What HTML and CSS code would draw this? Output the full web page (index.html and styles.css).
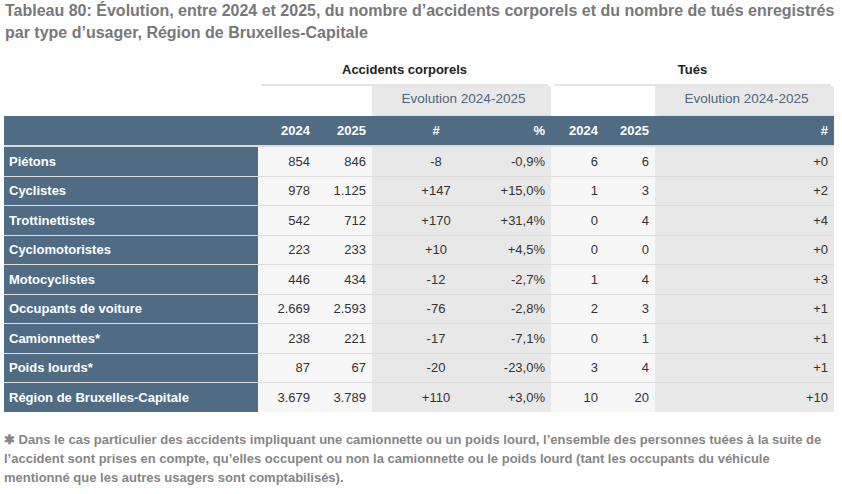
FILE: index.html
```html
<!DOCTYPE html>
<html lang="fr">
<head>
<meta charset="utf-8">
<title>Tableau 80</title>
<link rel="stylesheet" href="styles.css">
</head>
<body>
<h1 class="title">Tableau 80: Évolution, entre 2024 et 2025, du nombre d’accidents corporels et du nombre de tués enregistrés par type d’usager, Région de Bruxelles-Capitale</h1>
<table class="data">
  <colgroup>
    <col class="w-label">
    <col class="w-a24">
    <col class="w-a25">
    <col class="w-anum">
    <col class="w-apct">
    <col class="w-t24">
    <col class="w-t25">
    <col class="w-tnum">
  </colgroup>
  <thead>
    <tr class="groups">
      <th></th>
      <th colspan="4"><div class="group">Accidents corporels</div></th>
      <th colspan="3"><div class="group">Tués</div></th>
    </tr>
    <tr class="sub">
      <th></th>
      <th colspan="2"></th>
      <th colspan="2" class="evo"><div class="evo-in">Evolution 2024-2025</div></th>
      <th colspan="2"></th>
      <th class="evo"><div class="evo-in">Evolution 2024-2025</div></th>
    </tr>
    <tr class="cols">
      <th></th>
      <th>2024</th>
      <th>2025</th>
      <th class="center">#</th>
      <th>%</th>
      <th>2024</th>
      <th>2025</th>
      <th>#</th>
    </tr>
  </thead>
  <tbody>
    <tr><th>Piétons</th><td class="yr">854</td><td class="yr">846</td><td class="ev center">-8</td><td class="ev">-0,9%</td><td class="yr">6</td><td class="yr">6</td><td class="ev">+0</td></tr>
    <tr><th>Cyclistes</th><td class="yr">978</td><td class="yr">1.125</td><td class="ev center">+147</td><td class="ev">+15,0%</td><td class="yr">1</td><td class="yr">3</td><td class="ev">+2</td></tr>
    <tr><th>Trottinettistes</th><td class="yr">542</td><td class="yr">712</td><td class="ev center">+170</td><td class="ev">+31,4%</td><td class="yr">0</td><td class="yr">4</td><td class="ev">+4</td></tr>
    <tr><th>Cyclomotoristes</th><td class="yr">223</td><td class="yr">233</td><td class="ev center">+10</td><td class="ev">+4,5%</td><td class="yr">0</td><td class="yr">0</td><td class="ev">+0</td></tr>
    <tr><th>Motocyclistes</th><td class="yr">446</td><td class="yr">434</td><td class="ev center">-12</td><td class="ev">-2,7%</td><td class="yr">1</td><td class="yr">4</td><td class="ev">+3</td></tr>
    <tr><th>Occupants de voiture</th><td class="yr">2.669</td><td class="yr">2.593</td><td class="ev center">-76</td><td class="ev">-2,8%</td><td class="yr">2</td><td class="yr">3</td><td class="ev">+1</td></tr>
    <tr><th>Camionnettes*</th><td class="yr">238</td><td class="yr">221</td><td class="ev center">-17</td><td class="ev">-7,1%</td><td class="yr">0</td><td class="yr">1</td><td class="ev">+1</td></tr>
    <tr><th>Poids lourds*</th><td class="yr">87</td><td class="yr">67</td><td class="ev center">-20</td><td class="ev">-23,0%</td><td class="yr">3</td><td class="yr">4</td><td class="ev">+1</td></tr>
    <tr><th>Région de Bruxelles-Capitale</th><td class="yr">3.679</td><td class="yr">3.789</td><td class="ev center">+110</td><td class="ev">+3,0%</td><td class="yr">10</td><td class="yr">20</td><td class="ev">+10</td></tr>
  </tbody>
</table>
<p class="note">✱ Dans le cas particulier des accidents impliquant une camionnette ou un poids lourd, l’ensemble des personnes tuées à la suite de l’accident sont prises en compte, qu’elles occupent ou non la camionnette ou le poids lourd (tant les occupants du véhicule mentionné que les autres usagers sont comptabilisés).</p>
</body>
</html>
```
FILE: styles.css
```css
html, body {
  margin: 0;
  padding: 0;
  background: #ffffff;
}

body {
  padding: 0 4px;
  font-family: "Liberation Sans", Arial, sans-serif;
  color: #333333;
}

.title {
  margin: 0;
  padding-left: 1px;
  font-size: 16px;
  line-height: 22px;
  font-weight: bold;
  color: #787878;
}

.data {
  margin-top: 12px;
  width: 830px;
  table-layout: fixed;
  border-collapse: separate;
  border-spacing: 0;
  font-size: 13px;
  line-height: 15px;
}

.w-label { width: 254px; }
.w-a24 { width: 58px; }
.w-a25 { width: 56px; }
.w-anum { width: 128px; }
.w-apct { width: 51px; }
.w-t24 { width: 53px; }
.w-t25 { width: 51px; }
.w-tnum { width: 179px; }

.data th,
.data td {
  padding: 0 6px 0 0;
  text-align: right;
  vertical-align: middle;
}

.data .center { text-align: center; padding: 0; }

/* group header row */
.groups th {
  padding: 0 3px;
  text-align: center;
  font-weight: bold;
  color: #222222;
}
.group {
  height: 28px;
  line-height: 28px;
  border-bottom: 2px solid #e4e4e4;
}
.groups th:first-child { padding: 0; }

/* evolution sub header */
.sub th {
  height: 30px;
  padding: 0;
}
.sub .evo {
  background: #e8e8e8;
  text-align: center;
  font-weight: normal;
  font-size: 13.5px;
  color: #4d6680;
}
.evo-in {
  margin-left: 4px;
  height: 29px;
  line-height: 26px;
  border-bottom: 1px solid #dcdcdc;
}

/* column header row */
.cols th {
  height: 29px;
  background: #506c85;
  color: #ffffff;
  font-weight: bold;
  border-bottom: 2px solid #dddddd;
}

/* body */
.data tbody th,
.data tbody td {
  height: 28.5px;
  border-bottom: 1px solid #dddddd;
}
.data tbody tr:last-child th,
.data tbody tr:last-child td {
  border-bottom: none;
  height: 29px;
}
.data tbody th {
  background: #506c85;
  color: #ffffff;
  font-weight: bold;
  text-align: left;
  padding-left: 5px;
}
.data .yr { background: #f7f7f7; }
.data .ev { background: #e8e8e8; }

.note {
  margin: 18px 0 0;
  width: 830px;
  font-size: 13px;
  line-height: 19px;
  font-weight: bold;
  color: #868686;
}
```
